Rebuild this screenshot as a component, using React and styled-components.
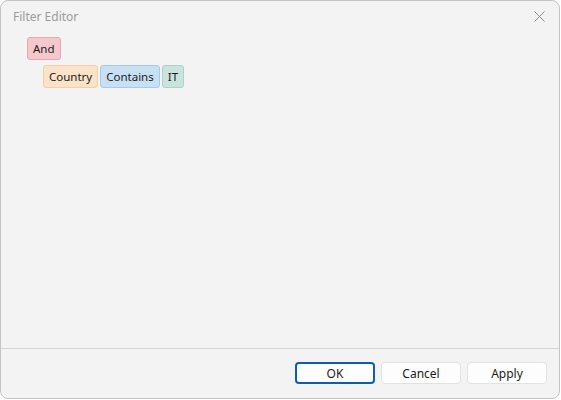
import styled, { createGlobalStyle } from "styled-components";

const Global = createGlobalStyle`
  html, body { margin: 0; padding: 0; background: #ffffff; }
  * { box-sizing: border-box; }
`;

const palette = {
  group: { bg: "#f5c8cd", border: "#e9a8b0" },
  field: { bg: "#fae3c8", border: "#f3cfa2" },
  op: { bg: "#c8e0f4", border: "#a6cbea" },
  value: { bg: "#cae3dd", border: "#a9d2c8" },
};

const Ventana = styled.div`
  width: 560px;
  height: 399px;
  background: #f3f3f3;
  border: 1px solid #c4c4c4;
  border-radius: 8px;
  display: flex;
  flex-direction: column;
  font-family: "Segoe UI", "Noto Sans", "Open Sans", sans-serif;
  font-size: 12px;
  color: #1b1b1b;
  overflow: hidden;
`;

const BarraTitulo = styled.div`
  height: 30px;
  display: flex;
  align-items: center;
  justify-content: space-between;
  padding: 0 12px 0 12px;
`;

const Titulo = styled.span`
  color: #9b9b9b;
  font-size: 12px;
`;

const Cerrar = styled.button`
  border: none;
  background: none;
  padding: 0;
  width: 14px;
  height: 14px;
  display: flex;
  align-items: center;
  justify-content: center;
  color: #8a8a8a;
  margin-right: 1px;
`;

const Arbol = styled.div`
  flex: 1;
  padding: 6px 26px;
  display: flex;
  flex-direction: column;
  gap: 5px;
`;

const Fila = styled.div`
  display: flex;
  gap: 2px;
  padding-left: ${(p) => p.nivel * 16}px;
`;

const Chip = styled.span`
  height: 23px;
  display: inline-flex;
  align-items: center;
  padding: 0 5px;
  border-radius: 3px;
  font-size: 11.5px;
  background: ${(p) => palette[p.tipo].bg};
  border: 1px solid ${(p) => palette[p.tipo].border};
  color: #1b1b1b;
`;

const Pie = styled.div`
  height: 50px;
  border-top: 1px solid #d3d3d3;
  display: flex;
  justify-content: flex-end;
  align-items: flex-start;
  gap: 6px;
  padding: 13px 12px 0 0;
`;

const Boton = styled.button`
  width: 80px;
  height: 22px;
  font-family: inherit;
  font-size: 12px;
  color: #1b1b1b;
  background: #fdfdfd;
  border: ${(p) => (p.primario ? "2px solid #0a5fb4" : "1px solid #e2e2e2")};
  border-radius: 4px;
  padding: 0;
`;

export default function App() {
  return (
    <>
      <Global />
      <Ventana>
        <BarraTitulo>
          <Titulo>Filter Editor</Titulo>
          <Cerrar aria-label="Close">
            <svg width="11" height="11" viewBox="0 0 11 11">
              <path d="M0.5 0.5 L10.5 10.5 M10.5 0.5 L0.5 10.5" stroke="currentColor" strokeWidth="1" />
            </svg>
          </Cerrar>
        </BarraTitulo>
        <Arbol>
          <Fila nivel={0}>
            <Chip tipo="group">And</Chip>
          </Fila>
          <Fila nivel={1}>
            <Chip tipo="field">Country</Chip>
            <Chip tipo="op">Contains</Chip>
            <Chip tipo="value">IT</Chip>
          </Fila>
        </Arbol>
        <Pie>
          <Boton primario>OK</Boton>
          <Boton>Cancel</Boton>
          <Boton>Apply</Boton>
        </Pie>
      </Ventana>
    </>
  );
}
